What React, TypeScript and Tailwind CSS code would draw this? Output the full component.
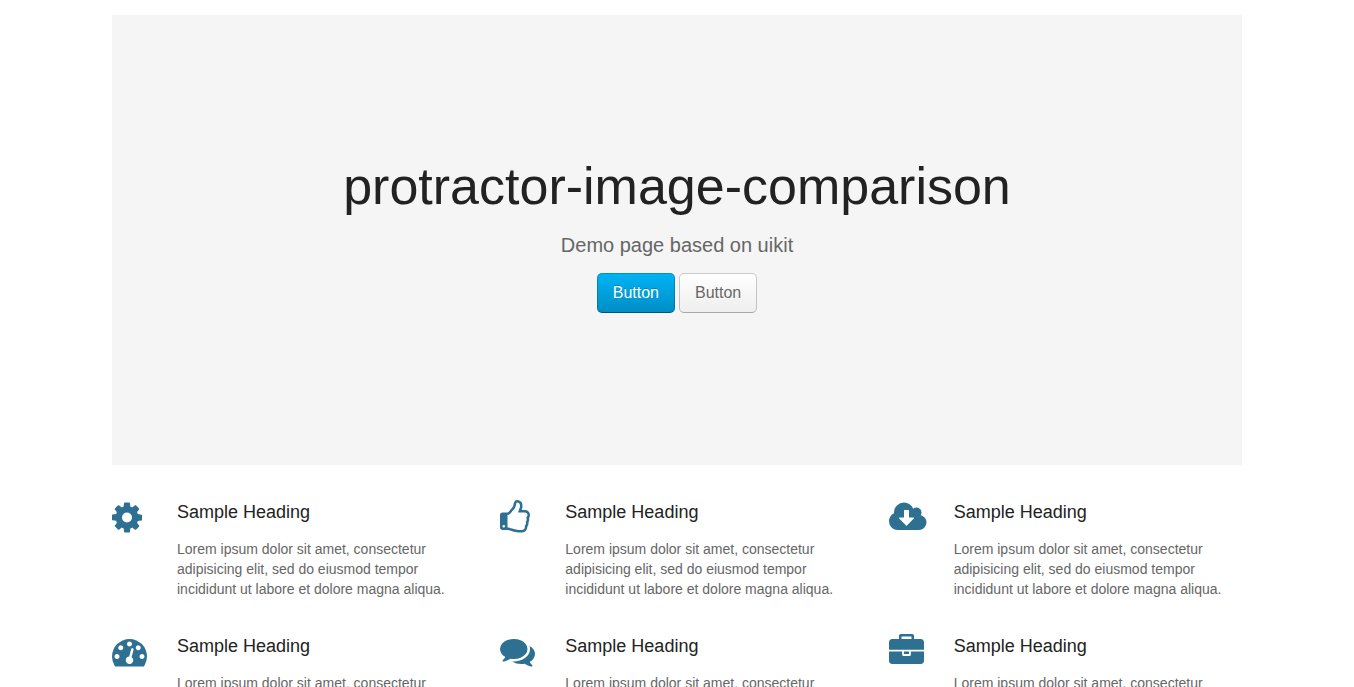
type Feature = {
  name: string;
  viewBox: string;
  path: string;
};

const features: Feature[] = [
  {
    name: "cog",
    viewBox: "128 0 1792 1792",
    path: "M1152 896q0-106-75-181t-181-75-181 75-75 181 75 181 181 75 181-75 75-181zm512-109v222q0 12-8 23t-20 13l-185 28q-19 54-39 91 35 50 107 138 10 12 10 25t-9 23q-27 37-99 108t-94 71q-12 0-26-9l-138-108q-44 23-91 38-16 136-29 186-7 28-36 28h-222q-14 0-24.5-8.5t-11.5-21.5l-28-184q-49-16-90-37l-141 107q-10 9-25 9-14 0-25-11-126-114-165-168-7-10-7-23 0-12 8-23 15-21 51-66.5t54-70.5q-27-50-41-99l-183-27q-13-2-21-12.5t-8-23.5v-222q0-12 8-23t19-13l186-28q14-46 39-92-40-57-107-138-10-12-10-24 0-10 9-23 26-36 98.5-107.5t94.5-71.5q13 0 26 10l138 107q44-23 91-38 16-136 29-186 7-28 36-28h222q14 0 24.5 8.5t11.5 21.5l28 184q49 16 90 37l142-107q9-9 24-9 13 0 25 10 129 119 165 170 7 8 7 22 0 12-8 23-15 21-51 66.5t-54 70.5q26 50 41 98l183 28q13 2 21 12.5t8 23.5z",
  },
  {
    name: "thumbs-up",
    viewBox: "128 0 1792 1792",
    path: "M384 1344q0-26-19-45t-45-19-45 19-19 45 19 45 45 19 45-19 19-45zm1152-576q0-51-39-89.5t-89-38.5h-352q0-58 48-159.5t48-160.5q0-98-32-145t-128-47q-26 26-38 85t-30.5 125.5-59.5 109.5q-22 23-77 91-4 5-23 30t-31.5 41-34.5 42.5-40 44-38.5 35.5-40 27-35.5 9h-32v640h32q13 0 31.5 3t33 6.5 38 11 35 11.5 35.5 12.5 29 10.5q211 73 342 73h121q192 0 192-167 0-26-5-56 30-16 47.5-52.5t17.5-73.5-18-69q53-50 53-119 0-25-10-55.5t-25-47.5q32-1 53.5-47t21.5-81zm128-1q0 89-49 163 9 33 9 69 0 77-38 144 3 21 3 43 0 101-60 178 1 139-85 219.5t-227 80.5h-129q-96 0-189.5-22.5t-216.5-65.5q-116-40-138-40h-288q-53 0-90.5-37.5t-37.5-90.5v-640q0-53 37.5-90.5t90.5-37.5h274q36-24 137-155 58-75 107-128 24-25 35.5-85.5t30.5-126.5 62-108q39-37 90-37 84 0 151 32.5t102 101.5 35 186q0 93-48 192h176q104 0 180 76t76 179z",
  },
  {
    name: "cloud-download",
    viewBox: "-64 0 1792 1792",
    path: "M1216 928q0-14-9-23t-23-9h-224v-352q0-13-9.5-22.5t-22.5-9.5h-192q-13 0-22.5 9.5t-9.5 22.5v352h-224q-13 0-22.5 9.5t-9.5 22.5q0 14 9 23l352 352q9 9 23 9t23-9l351-351q10-12 10-24zm640 224q0 159-112.5 271.5t-271.5 112.5h-1088q-185 0-316.5-131.5t-131.5-316.5q0-130 70-240t188-165q-2-30-2-43 0-212 150-362t362-150q156 0 285.5 87t188.5 231q71-62 166-62 106 0 181 75t75 181q0 76-41 138 130 31 213.5 135.5t83.5 238.5z",
  },
  {
    name: "dashboard",
    viewBox: "0 0 1792 1792",
    path: "M384 1152q0-53-37.5-90.5t-90.5-37.5-90.5 37.5-37.5 90.5 37.5 90.5 90.5 37.5 90.5-37.5 37.5-90.5zm192-448q0-53-37.5-90.5t-90.5-37.5-90.5 37.5-37.5 90.5 37.5 90.5 90.5 37.5 90.5-37.5 37.5-90.5zm428 481l101-382q6-26-7.5-48.5t-38.5-29.5-48 6.5-30 39.5l-101 382q-60 5-107 43.5t-63 98.5q-20 77 20 146t117 89 146-20 89-117q16-60-6-117t-72-91zm660-33q0-53-37.5-90.5t-90.5-37.5-90.5 37.5-37.5 90.5 37.5 90.5 90.5 37.5 90.5-37.5 37.5-90.5zm-640-640q0-53-37.5-90.5t-90.5-37.5-90.5 37.5-37.5 90.5 37.5 90.5 90.5 37.5 90.5-37.5 37.5-90.5zm448 192q0-53-37.5-90.5t-90.5-37.5-90.5 37.5-37.5 90.5 37.5 90.5 90.5 37.5 90.5-37.5 37.5-90.5zm320 448q0 261-141 483-19 29-54 29h-1402q-35 0-54-29-141-221-141-483 0-182 71-348t191-286 286-191 348-71 348 71 286 191 191 286 71 348z",
  },
  {
    name: "comments",
    viewBox: "0 0 1792 1792",
    path: "M1408 768q0 139-94 257t-256.5 186.5-353.5 68.5q-86 0-176-16-124 88-278 128-36 9-86 16h-3q-11 0-20.5-8t-11.5-21q-1-3-1-6.5t.5-6.5 2-6l2.5-5 3.5-5.5 4-5 4.5-5 4-4.5q5-6 23-25t26-29.5 22.5-29 25-38.5 20.5-44q-124-72-195-177t-71-224q0-139 94-257t256.5-186.5 353.5-68.5 353.5 68.5 256.5 186.5 94 257zm384 256q0 120-71 224.5t-195 176.5q10 24 20.5 44t25 38.5 22.5 29 26 29.5 23 25q1 1 4 4.5t4.5 5 4 5 3.5 5.5l2.5 5 2 6 .5 6.5-1 6.5q-3 14-13 22t-22 7q-50-7-86-16-154-40-278-128-90 16-176 16-271 0-472-132 58 4 88 4 161 0 309-45t264-129q125-92 192-212t67-254q0-77-23-152 129 71 204 178t75 230z",
  },
  {
    name: "briefcase",
    viewBox: "0 0 1792 1792",
    path: "M640 256h512v-128h-512v128zm1152 640v480q0 66-47 113t-113 47h-1472q-66 0-113-47t-47-113v-480h672v160q0 26 19 45t45 19h320q26 0 45-19t19-45v-160h672zm-768 0v128h-256v-128h256zm768-480v384h-1792v-384q0-66 47-113t113-47h352v-160q0-40 28-68t68-28h576q40 0 68 28t28 68v160h352q66 0 113 47t47 113z",
  },
];

function FeatureCard({ feature }: { feature: Feature }) {
  return (
    <article className="flex items-start gap-[30px]">
      <svg
        viewBox={feature.viewBox}
        className="size-[35px] shrink-0 overflow-visible fill-[#2d7091]"
        aria-hidden="true"
      >
        <path d={feature.path} />
      </svg>
      <div>
        <h3 className="text-lg leading-6 text-[#222]">Sample Heading</h3>
        <p className="mt-[15px]">
          Lorem ipsum dolor sit amet, consectetur adipisicing elit, sed do eiusmod tempor incididunt ut labore et
          dolore magna aliqua.
        </p>
      </div>
    </article>
  );
}

export default function App() {
  return (
    <main className="mx-auto max-w-[1200px] px-[35px] py-[15px] font-['Liberation_Sans',sans-serif] text-sm leading-5 text-[#666]">
      <header className="flex min-h-[450px] flex-col items-center justify-center bg-[#f5f5f5] text-center">
        <h1 className="text-[52px] leading-[62px] text-[#222]">protractor-image-comparison</h1>
        <p className="mt-4 text-xl leading-6">Demo page based on uikit</p>
        <div className="mt-4 mb-3 flex gap-1 text-base leading-[38px]">
          <button
            type="button"
            className="rounded-[5px] border border-black/20 border-b-black/40 bg-[#009dd8] bg-linear-to-b from-[#00b4f5] to-[#008dc5] bg-origin-border px-[15px] text-white [text-shadow:0_-1px_0_rgba(0,0,0,0.2)]"
          >
            Button
          </button>
          <button
            type="button"
            className="rounded-[5px] border border-black/20 border-b-black/30 bg-[#f7f7f7] bg-linear-to-b from-white to-[#eee] bg-origin-border px-[15px] [text-shadow:0_1px_0_#fff]"
          >
            Button
          </button>
        </div>
      </header>
      <section className="mt-[35px] grid grid-cols-1 gap-[35px] md:grid-cols-3">
        {features.map((feature) => (
          <FeatureCard key={feature.name} feature={feature} />
        ))}
      </section>
    </main>
  );
}
